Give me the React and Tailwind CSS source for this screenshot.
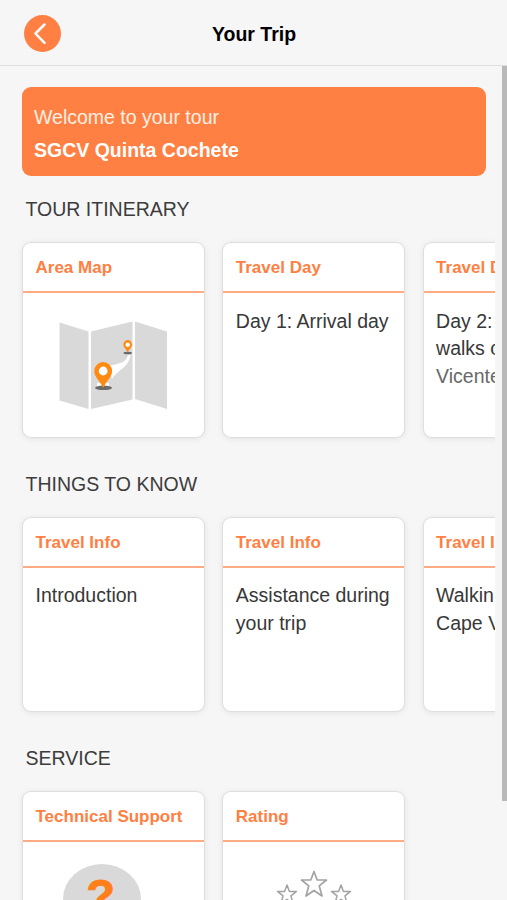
import React from 'react';

const sections = [
  {
    title: 'TOUR ITINERARY',
    cards: [
      { label: 'Area Map', art: 'map' },
      { label: 'Travel Day', lines: ['Day 1: Arrival day'] },
      { label: 'Travel Day', lines: ['Day 2:', 'walks on', 'Vicente'], fade: true },
    ],
  },
  {
    title: 'THINGS TO KNOW',
    cards: [
      { label: 'Travel Info', lines: ['Introduction'] },
      { label: 'Travel Info', lines: ['Assistance during', 'your trip'] },
      { label: 'Travel Info', lines: ['Walkin', 'Cape V'] },
    ],
  },
  {
    title: 'SERVICE',
    cards: [
      { label: 'Technical Support', art: 'support' },
      { label: 'Rating', art: 'rating' },
    ],
  },
];

const STAR = 'M0 -12.5 L3.2 -4 L12.5 -4 L5.2 1.8 L8 12 L0 6.5 L-8 12 L-5.2 1.8 L-12.5 -4 L-3.2 -4 Z';

const MapArt = () => (
  <svg className="mx-auto mt-[28px] block" width="109" height="90" viewBox="0 0 109 90">
    <g fill="#d9d9d9">
      <path d="M0.5 1.5 L29.5 10.5 V88 L0.5 79.5 Z" />
      <path d="M32 10.500 L73.500 0.500 V78.500 L32 88 Z" />
      <path d="M76 0.500 L108 10.500 V88 L76 78 Z" />
    </g>
    <path d="M69 34 C67 42 61 42 50 45 L53 58 C59 48 69 48 71.500 34 Z M38 62 H50 V67 H38 Z" fill="#fff" />
    <ellipse cx="44.500" cy="66.800" rx="8.500" ry="2.300" fill="#6b6b6b" />
    <ellipse cx="68.700" cy="32" rx="4.300" ry="1.300" fill="#6b6b6b" />
    <path
      fill="#ff8a0f"
      d="M44.200 67 C41 59.500 35.300 56.500 35.300 50 A8.900 8.900 0 0 1 53.100 50 C53.100 56.500 47.400 59.500 44.200 67 Z"
    />
    <circle cx="44.200" cy="50" r="4.400" fill="#fff" />
    <path
      fill="#ff8a0f"
      d="M68.700 31.500 C67 27.500 64.300 26.500 64.300 23.500 A4.400 4.400 0 0 1 73.100 23.500 C73.100 26.500 70.400 27.500 68.700 31.500 Z"
    />
    <circle cx="68.700" cy="23.700" r="2.200" fill="#fff" />
  </svg>
);

const SupportArt = () => (
  <div className="mx-auto mt-[22px] flex h-[70px] w-[78px] -translate-x-[12px] justify-center rounded-[50%] bg-[#d9d9d9]">
    <span className="mt-[8px] mr-[2px] text-[47px] leading-[47px] font-bold text-[#ff7f1a] [-webkit-text-stroke:1px_#ff7f1a]">?</span>
  </div>
);

const RatingArt = () => (
  <svg className="mx-auto mt-[26px] block" width="84" height="60" viewBox="0 0 84 60">
    <g fill="none" stroke="#a3a3a3" strokeLinejoin="round">
      <path d={STAR} transform="translate(42 16)" strokeWidth="1.700" />
      <path d={STAR} transform="translate(15 26.500) scale(0.760)" strokeWidth="2" />
      <path d={STAR} transform="translate(69 26.500) scale(0.760)" strokeWidth="2" />
    </g>
  </svg>
);

const Card = ({ label, lines = [], art, fade }) => (
  <div className="h-[193.500px] w-[181px] shrink-0 overflow-hidden rounded-[8px] bg-white shadow-[0_0_0_1px_#dedede,0_1px_6px_1px_rgba(0,0,0,0.08)]">
    <div className="h-[50px] border-b-2 border-[#ffac85] pr-3 pl-[12.500px] text-[17px] leading-[49px] font-bold whitespace-nowrap text-[#ff8042]">
      {label}
    </div>
    {art === 'map' && <MapArt />}
    {art === 'support' && <SupportArt />}
    {art === 'rating' && <RatingArt />}
    {!art && (
      <div className="pt-[14.500px] pr-3 pl-[12.500px] leading-[27.500px] whitespace-nowrap text-[#383838]">
        {lines.map((line, i) => (
          <p key={line} className={fade && i === 2 ? 'text-[#686868]' : ''}>
            {line}
          </p>
        ))}
      </div>
    )}
  </div>
);

const App = () => {
  return (
    <div className="flex h-[900px] w-full flex-col overflow-hidden bg-[#f6f6f6] font-['Liberation_Sans',Arial,sans-serif] text-[19.500px]">
      {/* Header */}
      <header className="grid h-[66px] shrink-0 grid-cols-[1fr_auto_1fr] items-center border-b border-[#dedede] px-6 pt-[2px]">
        <button className="flex h-[37px] w-[37px] items-center justify-center rounded-full bg-[#ff8042]" aria-label="Back">
          <svg width="37" height="37" viewBox="0 0 37 37" fill="none">
            <path d="M20.500 9.500 L11.500 18.500 L20.500 27.800" stroke="#fff" strokeWidth="2.500" strokeLinecap="round" strokeLinejoin="round" />
          </svg>
        </button>
        <h1 className="pt-[2px] pl-px font-bold text-black">Your Trip</h1>
      </header>

      <div className="flex min-h-0 flex-1">
        <main className="min-w-0 flex-1 overflow-hidden pt-[21px]">
          {/* Welcome banner */}
          <div className="mr-4 ml-[22px] h-[89px] rounded-[9px] bg-[#ff8042] px-3 pt-[14px] leading-[32.500px] text-white">
            <p className="text-[#fff0e5]">Welcome to your tour</p>
            <p className="font-bold">SGCV Quinta Cochete</p>
          </div>

          {sections.map((section) => (
            <section key={section.title} className="h-[274.500px]">
              <h2 className="pt-[19px] pl-[25.500px] leading-[28px] text-[#3c3c3c]">{section.title}</h2>
              <div className="mr-[7px] flex gap-[19.300px] overflow-hidden pt-[20.400px] pb-3 pl-[23px]">
                {section.cards.map((card, i) => (
                  <Card key={i} {...card} />
                ))}
              </div>
            </section>
          ))}
        </main>

        {/* Scroll track */}
        <div className="w-[5px] shrink-0">
          <div className="h-[735px] bg-[#b9b9b9]" />
        </div>
      </div>
    </div>
  );
};

export default App;
